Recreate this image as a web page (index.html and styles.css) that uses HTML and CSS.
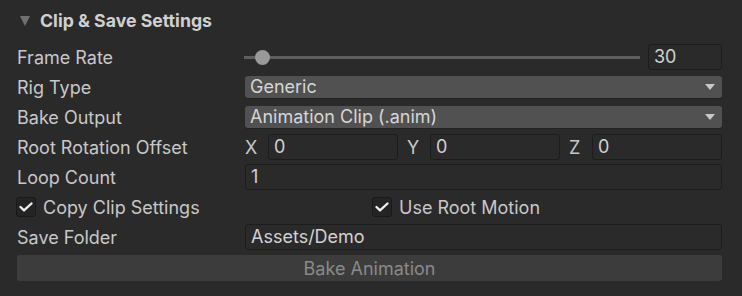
FILE: index.html
```html
<!DOCTYPE html>
<html lang="en">
<head>
    <meta charset="UTF-8">
    <title>Clip &amp; Save Settings</title>
    <link rel="stylesheet" href="styles.css">
</head>
<body>
    <div class="panel">
        <div class="foldout">
            <span class="foldout__arrow"></span>
            <span class="foldout__title">Clip &amp; Save Settings</span>
        </div>

        <div class="row">
            <span class="row__label">Frame Rate</span>
            <div class="row__field slider">
                <div class="slider__track">
                    <div class="slider__thumb"></div>
                </div>
                <div class="input input--num">30</div>
            </div>
        </div>

        <div class="row">
            <span class="row__label">Rig Type</span>
            <div class="row__field">
                <div class="dropdown">Generic<span class="dropdown__arrow"></span></div>
            </div>
        </div>

        <div class="row">
            <span class="row__label">Bake Output</span>
            <div class="row__field">
                <div class="dropdown">Animation Clip (.anim)<span class="dropdown__arrow"></span></div>
            </div>
        </div>

        <div class="row">
            <span class="row__label">Root Rotation Offset</span>
            <div class="row__field vec3">
                <span class="vec3__axis">X</span><div class="input">0</div>
                <span class="vec3__axis">Y</span><div class="input">0</div>
                <span class="vec3__axis">Z</span><div class="input">0</div>
            </div>
        </div>

        <div class="row">
            <span class="row__label">Loop Count</span>
            <div class="row__field">
                <div class="input">1</div>
            </div>
        </div>

        <div class="row">
            <label class="toggle">
                <span class="toggle__box"><svg viewBox="0 0 14 10" width="14" height="10"><path d="M1.5 5 L5 8.3 L12.5 1.5" fill="none" stroke="#f0f0f0" stroke-width="2.3" stroke-linecap="round" stroke-linejoin="round"/></svg></span>
                Copy Clip Settings
            </label>
            <label class="toggle toggle--right">
                <span class="toggle__box"><svg viewBox="0 0 14 10" width="14" height="10"><path d="M1.5 5 L5 8.3 L12.5 1.5" fill="none" stroke="#f0f0f0" stroke-width="2.3" stroke-linecap="round" stroke-linejoin="round"/></svg></span>
                Use Root Motion
            </label>
        </div>

        <div class="row">
            <span class="row__label">Save Folder</span>
            <div class="row__field">
                <div class="input">Assets/Demo</div>
            </div>
        </div>

        <div class="row row--button">
            <button class="bake-btn" disabled>Bake Animation</button>
        </div>
    </div>
</body>
</html>
```

FILE: styles.css
```css
body {
    margin: 0;
    background-color: #2a2a2a;
    font-family: Inter, "Noto Sans", sans-serif;
    color: #c8c8c8;
    font-size: 18px;
}
.panel {
    padding: 0 20px 0 17px;
}
.foldout {
    height: 42px;
    display: flex;
    align-items: center;
    padding-bottom: 1px;
    box-sizing: border-box;
}
.foldout__arrow {
    width: 0;
    height: 0;
    border-left: 5.5px solid transparent;
    border-right: 5.5px solid transparent;
    border-top: 10px solid #707070;
    margin: 0 10px 0 3px;
}
.foldout__title {
    font-weight: 700;
    font-size: 17.7px;
    color: #d0d0d0;
}
.row {
    height: 30px;
    display: flex;
    align-items: center;
}
.row__label {
    width: 228px;
    flex: none;
}
.row__field {
    flex: 1;
    display: flex;
    align-items: center;
}
.input {
    flex: 1;
    height: 26px;
    box-sizing: border-box;
    background: #2a2a2a;
    border: 1px solid #1d1d1d;
    border-radius: 3px;
    padding: 0 0 0 5px;
    line-height: 24px;
    color: #d2d2d2;
}
.input--num {
    flex: none;
    width: 74px;
    margin-left: 8px;
}

/* slider */
.slider__track {
    flex: 1;
    height: 3px;
    background: #5e5e5e;
    position: relative;
    margin-left: -1px;
}
.slider__thumb {
    position: absolute;
    left: 11px;
    top: -6px;
    width: 15px;
    height: 15px;
    border-radius: 50%;
    background: #999999;
}

/* dropdown */
.dropdown {
    flex: 1;
    height: 22px;
    box-sizing: border-box;
    background: #515151;
    border-radius: 3px;
    padding: 0 0 0 5px;
    line-height: 22px;
    color: #d6d6d6;
    display: flex;
    justify-content: space-between;
    align-items: center;
    box-shadow: 0 1px 0 #222222;
}
.dropdown__arrow {
    width: 0;
    height: 0;
    border-left: 5.5px solid transparent;
    border-right: 5.5px solid transparent;
    border-top: 6px solid #c8c8c8;
    margin-right: 7px;
}

/* vector3 */
.vec3__axis {
    width: 23px;
    flex: none;
}
.vec3 .input {
    margin-right: 9px;
}
.vec3 .input:last-child {
    margin-right: 0;
}

/* toggles */
.toggle {
    display: flex;
    align-items: center;
    gap: 7px;
    width: 356px;
}
.toggle--right {
    width: auto;
}
.toggle__box {
    width: 20px;
    height: 20px;
    box-sizing: border-box;
    background: #242424;
    border: 1px solid #1a1a1a;
    border-radius: 3px;
    display: flex;
    align-items: center;
    justify-content: center;
    margin-left: -1px;
}

/* button */
.row--button {
    align-items: flex-start;
    padding-top: 3px;
    box-sizing: border-box;
}
.bake-btn {
    flex: 1;
    height: 26px;
    background: #3c3c3c;
    border: none;
    border-radius: 3px;
    font-family: inherit;
    font-size: 18px;
    color: #8a8a8a;
}
```
